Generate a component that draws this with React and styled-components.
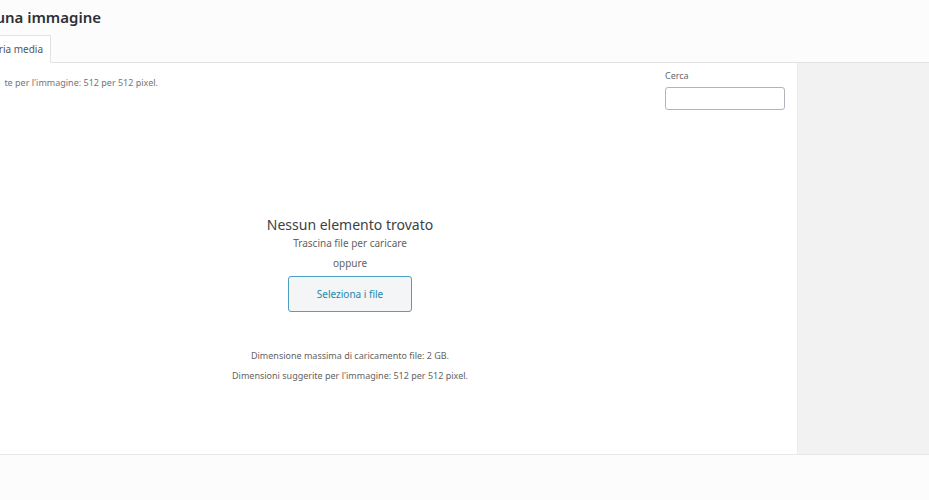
import React from "react";
import styled, { createGlobalStyle } from "styled-components";

const GlobalStyle = createGlobalStyle`
  *, *::before, *::after { box-sizing: border-box; }
  body {
    margin: 0;
    background: #fcfcfc;
    color: #3c434a;
    font-family: "Noto Sans", "Open Sans", sans-serif;
    font-size: 10px;
    line-height: 20px;
  }
  h1, h2, p { margin: 0; }
`;

const Modal = styled.div`
  display: flex;
  flex-direction: column;
  min-height: 100vh;
  overflow: hidden;
`;

const Header = styled.header`
  display: flex;
  flex-direction: column;
  border-bottom: 1px solid #e2e2e4;
`;

const ClippedLine = styled.div`
  display: flex;
  justify-content: flex-end;
  width: ${(p) => p.$width}px;
  white-space: nowrap;
`;

const Title = styled.h1`
  font-size: 15px;
  font-weight: 600;
  line-height: 35px;
  color: #2c3138;
`;

const Tab = styled.button`
  height: 28px;
  margin-bottom: -1px;
  padding: 0 7px;
  border: 1px solid #e2e2e4;
  border-bottom-color: #fff;
  background: #fff;
  color: #50575e;
  font: inherit;
  white-space: nowrap;
`;

const Body = styled.div`
  display: flex;
  flex: 1;
`;

const Browser = styled.main`
  display: flex;
  flex: 1;
  flex-direction: column;
  background: #fff;
`;

const Toolbar = styled.div`
  display: flex;
  justify-content: space-between;
  align-items: flex-start;
  padding: 3px 12px 0 0;
`;

const Hint = styled.p`
  padding-top: 7px;
  font-size: 9px;
  color: #757575;
`;

const Search = styled.div`
  display: flex;
  flex-direction: column;
  width: 120px;
  font-size: 9px;
  color: #646970;
`;

const SearchInput = styled.input`
  width: 100%;
  height: 23px;
  margin-top: 1px;
  padding: 0 6px;
  border: 1px solid #b0b5bd;
  border-radius: 3px;
  background: #fff;
  font: inherit;
`;

const Uploader = styled.section`
  display: flex;
  flex-direction: column;
  align-items: center;
  padding: 106px 97px 0 0;
  text-align: center;
`;

const EmptyTitle = styled.h2`
  font-size: 14px;
  font-weight: 400;
  line-height: 17px;
  color: #3c4148;
`;

const Text = styled.p`
  font-size: ${(p) => (p.$small ? 9 : 10)}px;
  line-height: 20px;
  color: #646464;
`;

const Limits = styled.div`
  padding-top: 34px;
`;

const SelectButton = styled.button`
  height: 36px;
  margin-top: 3px;
  padding: 0 28px;
  border: 1px solid #4da0c0;
  border-radius: 3px;
  background: #f3f5f6;
  color: #2387b0;
  font: inherit;
`;

const Sidebar = styled.aside`
  width: 132px;
  border-left: 1px solid #ececec;
  background: #f2f2f2;
`;

const Footer = styled.footer`
  height: 46px;
  border-top: 1px solid #e8e8e8;
`;

export default function App() {
  return (
    <>
      <GlobalStyle />
      <Modal>
        <Header>
          <ClippedLine $width={101}>
            <Title>una immagine</Title>
          </ClippedLine>
          <ClippedLine $width={51}>
            <Tab type="button">ria media</Tab>
          </ClippedLine>
        </Header>
        <Body>
          <Browser>
            <Toolbar>
              <ClippedLine $width={158}>
                <Hint>te per l'immagine: 512 per 512 pixel.</Hint>
              </ClippedLine>
              <Search>
                <label htmlFor="media-search">Cerca</label>
                <SearchInput id="media-search" type="search" />
              </Search>
            </Toolbar>
            <Uploader>
              <EmptyTitle>Nessun elemento trovato</EmptyTitle>
              <Text>Trascina file per caricare</Text>
              <Text>oppure</Text>
              <SelectButton type="button">Seleziona i file</SelectButton>
              <Limits>
                <Text $small>Dimensione massima di caricamento file: 2 GB.</Text>
                <Text $small>Dimensioni suggerite per l'immagine: 512 per 512 pixel.</Text>
              </Limits>
            </Uploader>
          </Browser>
          <Sidebar />
        </Body>
        <Footer />
      </Modal>
    </>
  );
}
